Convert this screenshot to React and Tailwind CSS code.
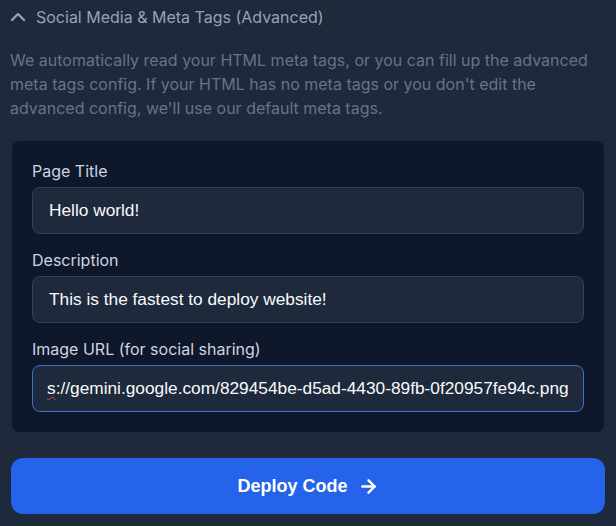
import React from "react";
import { ChevronUp, ArrowRight } from "lucide-react";

const inter = { fontFamily: "Inter, 'Noto Sans', sans-serif" };
const arial = { fontFamily: "'Liberation Sans', Arial, sans-serif" };

function Field({ label, children }) {
  return (
    <div className="flex flex-col">
      <label className="text-[16px] leading-5 text-[#cbd5e1] mb-[6px]" style={inter}>
        {label}
      </label>
      {children}
    </div>
  );
}

export default function App() {
  return (
    <div className="w-full h-[526px] overflow-hidden bg-[#1e293b] px-[11px]" style={inter}>
      <div className="h-[34px] flex items-center gap-[6px]">
        <ChevronUp size={24} strokeWidth={2.4} className="text-[#94a3b8] -ml-[5px]" />
        <span className="text-[16px] text-[#94a3b8]">Social Media &amp; Meta Tags (Advanced)</span>
      </div>
      <p className="mt-[14px] -ml-[1px] text-[16px] leading-6 text-[#64748b]">
        We automatically read your HTML meta tags, or you can fill up the advanced meta tags config. If your HTML has no meta tags or you don't edit the advanced config, we'll use our default meta tags.
      </p>
      <div className="mt-[21px] ml-[1px] mr-[1px] rounded-lg bg-[#0f172a] p-5 flex flex-col gap-4">
        <Field label="Page Title">
          <div
            className="h-[47px] rounded-lg bg-[#1e293b] border border-[#334155] px-4 flex items-center text-[17.3px] text-[#f8fafc]"
            style={arial}
          >
            Hello world!
          </div>
        </Field>
        <Field label="Description">
          <div
            className="h-[47px] rounded-lg bg-[#1e293b] border border-[#334155] px-4 flex items-center text-[17.3px] text-[#f8fafc]"
            style={arial}
          >
            This is the fastest to deploy website!
          </div>
        </Field>
        <Field label="Image URL (for social sharing)">
          <div
            className="h-[47px] rounded-lg bg-[#1e293b] border border-[#3b74c4] pl-[14px] pr-4 flex items-center text-[17.3px] text-[#f8fafc] whitespace-nowrap overflow-hidden"
            style={arial}
          >
            <span className="underline decoration-wavy decoration-[#ef4444] decoration-1 underline-offset-2">s</span>
            <span>://gemini.google.com/829454be-d5ad-4430-89fb-0f20957fe94c.png</span>
          </div>
        </Field>
      </div>
      <button
        className="mt-[26px] w-full h-[56px] rounded-xl bg-[#2563eb] text-white flex items-center justify-center gap-[10px] text-[18px] font-bold"
        style={arial}
      >
        Deploy Code
        <ArrowRight size={21} strokeWidth={2.8} />
      </button>
    </div>
  );
}
